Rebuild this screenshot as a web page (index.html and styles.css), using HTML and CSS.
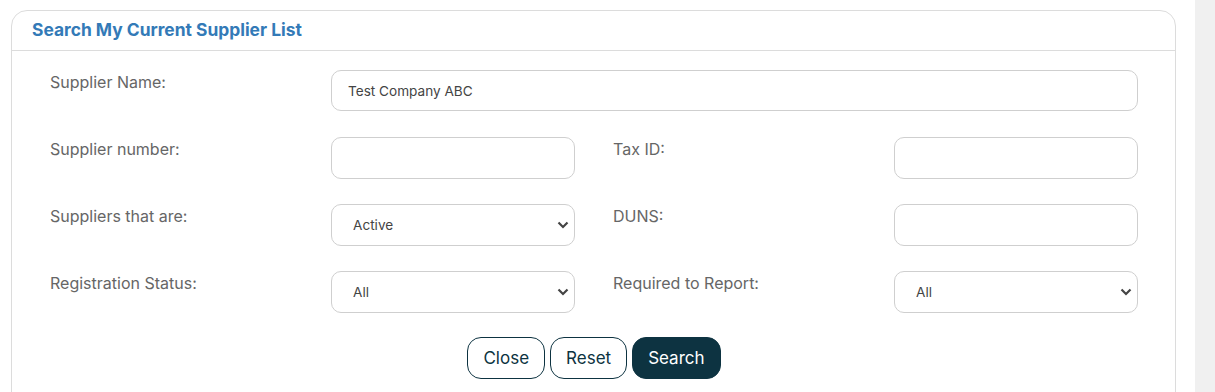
FILE: index.html
```html
<!DOCTYPE html>
<html lang="en">

<head>
    <meta charset="UTF-8">
    <meta name="viewport" content="width=device-width, initial-scale=1.0">
    <title>Supplier search</title>
    <link rel="stylesheet" href="styles.css">
</head>

<body>
    <div class="page">
        <div class="main">
            <div class="card">
                <div class="card-header">Search My Current Supplier List</div>
                <div class="card-body">
                    <div class="form-grid">
                        <label class="field-label">Supplier Name:</label>
                        <input type="text" class="field field-wide" value="Test Company ABC">

                        <label class="field-label">Supplier number:</label>
                        <input type="text" class="field">
                        <label class="field-label second">Tax ID:</label>
                        <input type="text" class="field">

                        <label class="field-label">Suppliers that are:</label>
                        <div class="select-wrap">
                            <select class="field">
                                <option>Active</option>
                                <option>Inactive</option>
                            </select>
                            <svg class="chevron" viewBox="0 0 12 8"><path d="M1.5 1.5 L6 6 L10.5 1.5"/></svg>
                        </div>
                        <label class="field-label second">DUNS:</label>
                        <input type="text" class="field">

                        <label class="field-label">Registration Status:</label>
                        <div class="select-wrap">
                            <select class="field">
                                <option>All</option>
                            </select>
                            <svg class="chevron" viewBox="0 0 12 8"><path d="M1.5 1.5 L6 6 L10.5 1.5"/></svg>
                        </div>
                        <label class="field-label second">Required to Report:</label>
                        <div class="select-wrap">
                            <select class="field">
                                <option>All</option>
                            </select>
                            <svg class="chevron" viewBox="0 0 12 8"><path d="M1.5 1.5 L6 6 L10.5 1.5"/></svg>
                        </div>
                    </div>

                    <div class="actions">
                        <button class="btn">Close</button>
                        <button class="btn">Reset</button>
                        <button class="btn btn-primary">Search</button>
                    </div>
                </div>
            </div>
        </div>
        <div class="side-strip"></div>
    </div>
</body>

</html>
```

FILE: styles.css
```css
html,
body {
    margin: 0;
    height: 100%;
    overflow: hidden;
}

body {
    font-family: Inter, "Liberation Sans", sans-serif;
    background-color: #fff;
    color: #444;
}

.page {
    display: flex;
    height: 100%;
}

.main {
    flex: 1;
    padding: 10px 19px 0 11px;
}

.side-strip {
    width: 20px;
    background-color: #f0f0f0;
}

.card {
    border: 1px solid #dcdcdc;
    border-radius: 16px 16px 0 0;
    min-height: 420px;
}

.card-header {
    padding: 9px 20px 10px;
    line-height: 20px;
    font-size: 17.4px;
    font-weight: 700;
    color: #337ab7;
    border-bottom: 1px solid #dcdcdc;
}

.card-body {
    padding: 19px 37px 0 38px;
}

.form-grid {
    display: grid;
    grid-template-columns: 281px 244px 319px 244px;
    grid-template-rows: 42px 42px 42px 42px;
    row-gap: 25px;
    align-items: start;
}

.field-label {
    font-size: 16px;
    color: #666;
    padding-top: 2px;
    line-height: 20px;
}

.field-label.second {
    padding-left: 38px;
}

.field {
    box-sizing: border-box;
    height: 42px;
    width: 100%;
    border: 1px solid #cfcfcf;
    border-radius: 10px;
    background-color: #fff;
    font-family: Inter, "Liberation Sans", sans-serif;
    font-size: 13.6px;
    color: #444;
    padding: 0 16px;
    outline: none;
}

.field-wide {
    grid-column: 2 / 5;
    height: 41px;
}

/* custom select with chevron */
.select-wrap {
    position: relative;
    height: 42px;
}

select.field {
    appearance: none;
    -webkit-appearance: none;
    padding-left: 21px;
    padding-right: 30px;
}

.chevron {
    position: absolute;
    right: 6px;
    top: 17px;
    width: 12px;
    height: 8px;
    fill: none;
    stroke: #444;
    stroke-width: 2.2;
    pointer-events: none;
}

.actions {
    display: flex;
    justify-content: center;
    gap: 5px;
    margin-top: 24px;
}

.btn {
    height: 42px;
    padding: 0 15px;
    border: 1px solid #0d3341;
    border-radius: 14px;
    background-color: #fff;
    color: #0d3341;
    font-family: Inter, "Liberation Sans", sans-serif;
    font-size: 17px;
    cursor: pointer;
}

.btn-primary {
    background-color: #0d3341;
    color: #fff;
}
```
